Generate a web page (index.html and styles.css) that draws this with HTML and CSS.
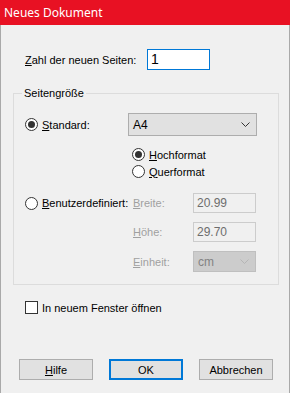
FILE: index.html
```html
<!DOCTYPE html>
<html lang="de">
<head>
    <meta charset="UTF-8">
    <meta name="viewport" content="width=device-width, initial-scale=1.0">
    <title>Neues Dokument</title>
    <link rel="stylesheet" href="styles.css">
</head>
<body>
    <div class="window">
        <div class="titlebar">Neues Dokument</div>

        <div class="pages">
            <label class="pages-label"><u>Z</u>ahl der neuen Seiten:</label>
            <div class="field active">1</div>
        </div>

        <fieldset class="group">
            <legend>Seitengröße</legend>

            <div class="row-standard">
                <div class="radio-item std-label">
                    <span class="radio checked"></span>
                    <span><u>S</u>tandard:</span>
                </div>
                <div class="select">
                    <span>A4</span>
                    <svg width="9" height="5" viewBox="0 0 9 5"><path d="M0.5 0.5 L4.5 4.5 L8.5 0.5" fill="none" stroke="#333" stroke-width="1"/></svg>
                </div>
            </div>

            <div class="orient">
                <div class="radio-item">
                    <span class="radio checked"></span>
                    <span><u>H</u>ochformat</span>
                </div>
                <div class="radio-item">
                    <span class="radio"></span>
                    <span><u>Q</u>uerformat</span>
                </div>
            </div>

            <div class="custom">
                <div class="radio-item custom-label">
                    <span class="radio"></span>
                    <span><u>B</u>enutzerdefiniert:</span>
                </div>
                <span class="dim"><u>B</u>reite:</span>
                <div class="field disabled">20.99</div>

                <span class="dim hoehe"><u>H</u>öhe:</span>
                <div class="field disabled">29.70</div>

                <span class="dim einheit"><u>E</u>inheit:</span>
                <div class="select disabled">
                    <span>cm</span>
                    <svg width="9" height="5" viewBox="0 0 9 5"><path d="M0.5 0.5 L4.5 4.5 L8.5 0.5" fill="none" stroke="#b5b5b5" stroke-width="1"/></svg>
                </div>
            </div>
        </fieldset>

        <div class="check-row">
            <span class="checkbox"></span>
            <span>In neuem Fenster öffnen</span>
        </div>

        <div class="buttons">
            <button class="btn"><u>H</u>ilfe</button>
            <button class="btn default">OK</button>
            <button class="btn">Abbrechen</button>
        </div>
    </div>
</body>
</html>
```

FILE: styles.css
```css
* {
    margin: 0;
    padding: 0;
    box-sizing: border-box;
}
body {
    background: #f0f0f0;
    font-family: "Liberation Sans", Arial, sans-serif;
    font-size: 11px;
    color: #000;
}
u {
    text-decoration: underline;
    text-underline-offset: 1px;
}
.window {
    width: 290px;
    height: 393px;
    background: #f0f0f0;
    border-left: 1px solid #a9a9a9;
    border-right: 1px solid #a9a9a9;
    display: flex;
    flex-direction: column;
}
.titlebar {
    height: 25px;
    background: #e81123;
    color: #fff;
    font-family: "Noto Sans", sans-serif;
    font-size: 12px;
    line-height: 25px;
    padding-left: 4px;
    margin: 0 -1px;
}
.pages {
    display: flex;
    align-items: center;
    margin-top: 24px;
    padding-left: 24px;
    height: 21px;
}
.pages-label {
    width: 122px;
}
.field {
    width: 63px;
    height: 21px;
    border: 1px solid #7a7a7a;
    background: #fff;
    padding-left: 3px;
    line-height: 19px;
}
.field.active {
    border-color: #0078d7;
    font-size: 14px;
}
.field.disabled {
    height: 20px;
    background: #f0f0f0;
    border-color: #cccccc;
    color: #6d6d6d;
    line-height: 18px;
    font-size: 12px;
}
.group {
    margin: 16px 0 0 12px;
    width: 266px;
    border: 1px solid #dcdcdc;
    padding: 0 0 12px 11px;
}
.group legend {
    margin-left: -3px;
    padding: 0 2px;
    line-height: 14px;
}
.radio-item {
    display: flex;
    align-items: center;
    gap: 4px;
    height: 17px;
}
.radio {
    width: 13px;
    height: 13px;
    border: 1px solid #333;
    border-radius: 50%;
    background: #fff;
    display: flex;
    align-items: center;
    justify-content: center;
}
.radio.checked::after {
    content: "";
    width: 7px;
    height: 7px;
    border-radius: 50%;
    background: #333;
}
.row-standard {
    display: flex;
    align-items: center;
    margin-top: 13px;
    height: 23px;
}
.std-label {
    width: 103px;
}
.select {
    width: 129px;
    height: 23px;
    background: #e1e1e1;
    border: 1px solid #adadad;
    display: flex;
    align-items: center;
    justify-content: space-between;
    padding: 0 6px 0 4px;
    font-size: 12px;
}
.select svg {
    display: block;
}
.select.disabled {
    width: 63px;
    height: 21px;
    background: #cccccc;
    border-color: #bfbfbf;
    color: #838383;
}
.orient {
    margin: 10px 0 0 107px;
}
.custom {
    display: grid;
    grid-template-columns: 108px 60px 63px;
    grid-auto-rows: auto;
    align-items: center;
    row-gap: 9px;
    margin-top: 13px;
}
.custom-label {
    grid-column: 1;
}
.dim {
    color: #a0a0a0;
    grid-column: 2;
}
.custom .field,
.custom .select {
    grid-column: 3;
}
.check-row {
    display: flex;
    align-items: center;
    gap: 4px;
    margin: 16px 0 0 24px;
    height: 13px;
}
.checkbox {
    width: 13px;
    height: 13px;
    border: 1px solid #333;
    background: #fff;
}
.buttons {
    display: flex;
    gap: 16px;
    margin-top: auto;
    margin-bottom: 13px;
    padding-left: 18px;
}
.btn {
    width: 74px;
    height: 21px;
    background: #e1e1e1;
    border: 1px solid #adadad;
    font-family: "Liberation Sans", Arial, sans-serif;
    font-size: 11px;
    color: #000;
}
.btn.default {
    border: 2px solid #0078d7;
}
```
